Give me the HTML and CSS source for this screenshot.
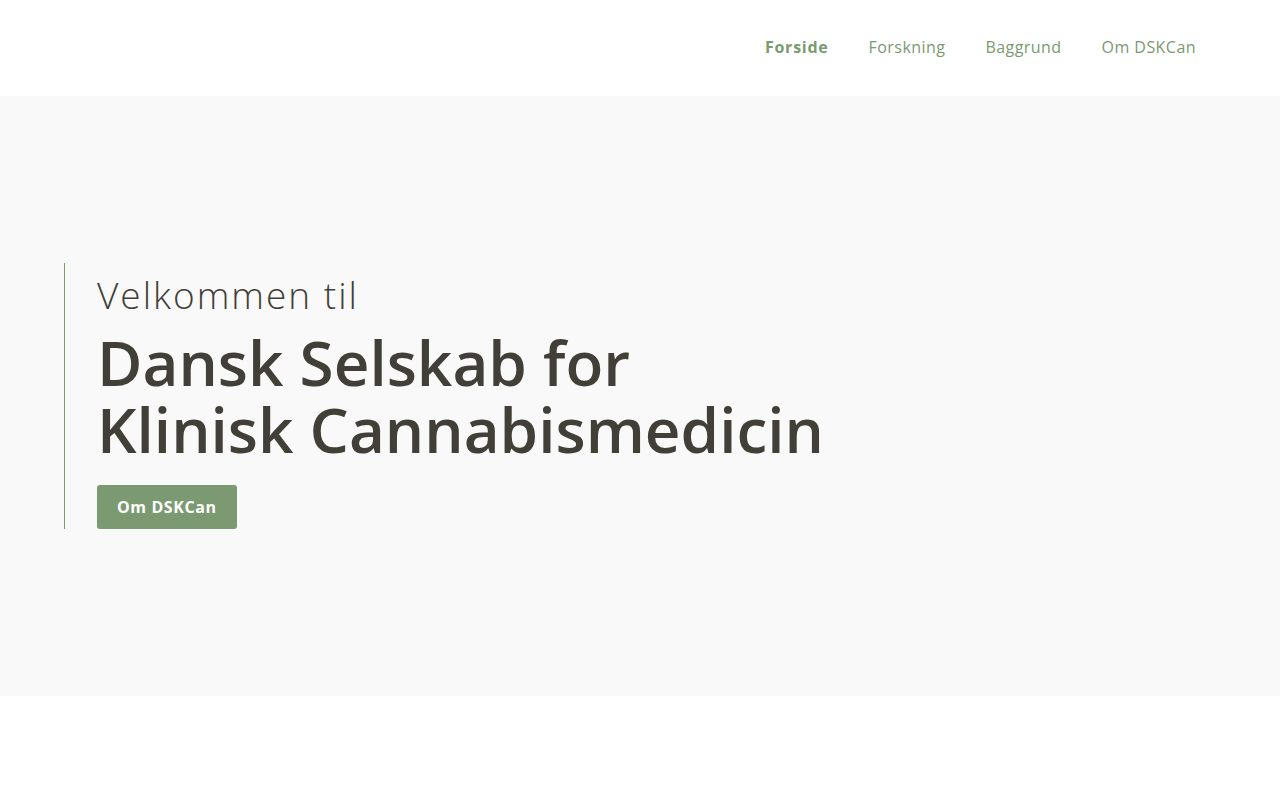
FILE: index.html
```html
<!DOCTYPE html>
<html lang="da">
<head>
<meta charset="utf-8">
<title>DSKCan</title>
<link rel="stylesheet" href="styles.css">
</head>
<body>
<header class="site-header">
  <nav class="main-nav">
    <a class="nav-link active" href="#">Forside</a>
    <a class="nav-link" href="#">Forskning</a>
    <a class="nav-link" href="#">Baggrund</a>
    <a class="nav-link" href="#">Om DSKCan</a>
  </nav>
</header>
<section class="hero">
  <div class="hero-inner">
    <p class="hero-intro">Velkommen til</p>
    <h1 class="hero-title"><span class="title-line">Dansk Selskab for</span><span class="title-line">Klinisk Cannabismedicin</span></h1>
    <a class="hero-btn" href="#">Om DSKCan</a>
  </div>
</section>
<div class="after"></div>
</body>
</html>
```
FILE: styles.css
```css
* { box-sizing: border-box; }
html, body { margin: 0; padding: 0; background: #fff; }
body { font-family: "Open Sans", "Liberation Sans", sans-serif; color: #423f38; }
.site-header {
  height: 96px;
  display: flex;
  justify-content: flex-end;
  align-items: center;
  padding-right: 64px;
  padding-bottom: 2px;
  background: #fff;
}
.main-nav { display: flex; }
.nav-link {
  color: #7a9a6f;
  text-decoration: none;
  font-size: 16px;
  padding: 0 20px;
  line-height: 24px;
  letter-spacing: 0.45px;
}
.nav-link.active { font-weight: 700; letter-spacing: 0.75px; }
.hero {
  height: 600px;
  background: #f9f9f9;
  display: flex;
  align-items: center;
  padding-left: 64px;
}
.hero-inner {
  border-left: 1px solid #7c9a72;
  padding-left: 32px;
}
.hero-intro {
  margin: 0 0 2px;
  font-size: 37px;
  font-weight: 300;
  line-height: 64px;
  letter-spacing: 2px;
  color: #423f38;
}
.hero-title {
  margin: 0 0 22px;
  font-size: 62px;
  font-weight: 600;
  line-height: 67px;
  color: #423f38;
}
.title-line { display: block; }
.hero-btn {
  display: inline-block;
  background: #7c9a72;
  color: #fff;
  font-weight: 700;
  font-size: 16px;
  line-height: 44px;
  height: 44px;
  padding: 0 20px;
  border-radius: 3px;
  text-decoration: none;
  letter-spacing: 0.6px;
  vertical-align: top;
}
.after { height: 104px; }
```
